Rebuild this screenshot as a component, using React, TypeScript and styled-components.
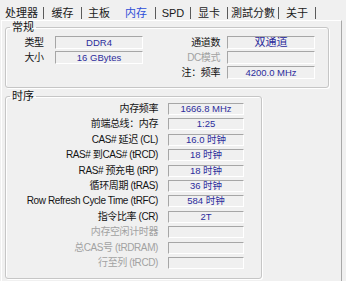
import React from "react";
import styled, { createGlobalStyle } from "styled-components";

const Global = createGlobalStyle`
  html, body { margin: 0; padding: 0; background: #f0f0f0; }
  #root { width: 346px; height: 281px; }
`;

const CJK = `"Liberation Sans", "Noto Sans CJK SC", sans-serif`;

const Window = styled.div`
  width: 346px;
  height: 281px;
  display: flex;
  flex-direction: column;
  overflow: hidden;
  background: #f0f0f0;
  font-family: ${CJK};
  color: #111;
`;

const TabBar = styled.div`
  height: 20px;
  box-sizing: border-box;
  padding-top: 7px;
  display: flex;
  align-items: flex-start;
`;

const Tab = styled.div<{ $w: number; $active?: boolean; $noBorder?: boolean }>`
  width: ${(p) => p.$w}px;
  box-sizing: border-box;
  height: 12px;
  line-height: 12px;
  font-size: 11px;
  text-align: center;
  white-space: nowrap;
  color: ${(p) => (p.$active ? "#2f4fd8" : "#1a1a1a")};
  border-right: 1px solid ${(p) => (p.$noBorder ? "transparent" : "#5a5a5a")};
`;

const Page = styled.div`
  flex: 1;
  margin: 0 4px 0 1px;
  border-top: 1px solid #ffffff;
  border-left: 1px solid #ffffff;
  border-right: 1px solid #a8a8a8;
  padding: 0 0 0 3px;
  display: flex;
  flex-direction: column;
  align-items: flex-start;
`;

const Group = styled.fieldset<{ $w: number; $h: number; $mt?: number }>`
  width: ${(p) => p.$w}px;
  height: ${(p) => p.$h}px;
  box-sizing: border-box;
  margin: ${(p) => p.$mt ?? 0}px 0 0 0;
  padding: 0;
  border: 1px solid #c6c6c6;
  border-radius: 3px;
  box-shadow: 1px 1px 0 #ffffff, inset 1px 1px 0 #ffffff;
  min-width: 0;
`;

const Legend = styled.legend`
  margin-left: 4px;
  padding: 0 2px;
  font-size: 11px;
  line-height: 12px;
  color: #111;
`;

const GeneralGrid = styled.div`
  width: 302px;
  margin: 3px 0 0 7px;
  display: grid;
  grid-template-columns: 42px 88px 84px 88px;
  grid-auto-rows: 13px;
  row-gap: 2px;
  align-items: center;
`;

const TimingGrid = styled.div`
  margin: 1px 0 0 0;
  display: grid;
  grid-template-columns: 152px 76px;
  column-gap: 10px;
  grid-auto-rows: 12px;
  row-gap: 3.4px;
  align-items: center;
`;

const Label = styled.div<{ $align?: string; $dim?: boolean; $pr?: number }>`
  font-size: 10px;
  letter-spacing: -0.4px;
  line-height: 12px;
  white-space: nowrap;
  text-align: ${(p) => p.$align ?? "right"};
  padding-right: ${(p) => p.$pr ?? 0}px;
  color: ${(p) => (p.$dim ? "#a2a2a2" : "#141414")};
`;

const Field = styled.div<{ $h?: number; $big?: boolean }>`
  height: ${(p) => p.$h ?? 12}px;
  box-sizing: border-box;
  border: 1px solid;
  border-color: #a6a6a6 #ffffff #ffffff #a6a6a6;
  background: #f0f0f0;
  font-family: ${CJK};
  font-size: ${(p) => (p.$big ? 11 : 9.5)}px;
  line-height: ${(p) => (p.$h ?? 12) - 2}px;
  text-align: center;
  color: #2c2c9c;
  white-space: nowrap;
  overflow: hidden;
`;

const tabs: { t: string; w: number; active?: boolean; noBorder?: boolean }[] = [
  { t: "处理器", w: 44 },
  { t: "缓存", w: 38 },
  { t: "主板", w: 35, noBorder: true },
  { t: "内存", w: 39, active: true },
  { t: "SPD", w: 35 },
  { t: "显卡", w: 37 },
  { t: "測試分數", w: 51 },
  { t: "关于", w: 37 },
];

const timings: { label: string; value: string; dim?: boolean }[] = [
  { label: "内存频率", value: "1666.8 MHz" },
  { label: "前端总线：内存", value: "1:25" },
  { label: "CAS# 延迟 (CL)", value: "16.0 时钟" },
  { label: "RAS# 到CAS# (tRCD)", value: "18 时钟" },
  { label: "RAS# 预充电 (tRP)", value: "18 时钟" },
  { label: "循环周期 (tRAS)", value: "36 时钟" },
  { label: "Row Refresh Cycle Time (tRFC)", value: "584 时钟" },
  { label: "指令比率 (CR)", value: "2T" },
  { label: "内存空闲计时器", value: "", dim: true },
  { label: "总CAS号 (tRDRAM)", value: "", dim: true },
  { label: "行至列 (tRCD)", value: "", dim: true },
];

export default function App() {
  return (
    <>
      <Global />
      <Window>
        <TabBar>
          {tabs.map((tb) => (
            <Tab key={tb.t} $w={tb.w} $active={tb.active} $noBorder={tb.noBorder}>
              {tb.t}
            </Tab>
          ))}
        </TabBar>
        <Page>
          <Group $w={324} $h={67}>
            <Legend>常规</Legend>
            <GeneralGrid>
              <Label $align="center">类型</Label>
              <Field $h={13}>DDR4</Field>
              <Label $pr={7}>通道数</Label>
              <Field $h={13} $big>双通道</Field>

              <Label $align="center">大小</Label>
              <Field $h={13}>16 GBytes</Field>
              <Label $pr={7} $dim>DC模式</Label>
              <Field $h={13}></Field>

              <span />
              <span />
              <Label $pr={7}>注：频率</Label>
              <Field $h={13}>4200.0 MHz</Field>
            </GeneralGrid>
          </Group>
          <Group $w={257} $h={189} $mt={2}>
            <Legend>时序</Legend>
            <TimingGrid>
              {timings.map((r) => (
                <React.Fragment key={r.label}>
                  <Label $dim={r.dim}>{r.label}</Label>
                  <Field>{r.value}</Field>
                </React.Fragment>
              ))}
            </TimingGrid>
          </Group>
        </Page>
      </Window>
    </>
  );
}
